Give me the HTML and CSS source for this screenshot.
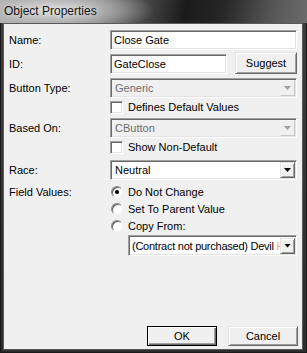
FILE: index.html
```html
<!DOCTYPE html>
<html lang="en">
<head>
    <meta charset="UTF-8">
    <title>Object Properties</title>
    <link rel="stylesheet" href="styles.css">
</head>
<body>
    <div class="window">
        <div class="titlebar"><span class="title">Object Properties</span></div>
        <div class="frame">
            <div class="client">
                <div class="form">
                    <div class="row first">
                        <span class="lbl">Name:</span>
                        <div class="textbox grow">Close Gate</div>
                    </div>
                    <div class="row">
                        <span class="lbl">ID:</span>
                        <div class="textbox id-box">GateClose</div>
                        <button class="btn suggest">Suggest</button>
                    </div>
                    <div class="row">
                        <span class="lbl">Button Type:</span>
                        <div class="combo disabled grow">
                            <span class="combo-text">Generic</span>
                            <span class="arrow"></span>
                        </div>
                    </div>
                    <div class="row check-row">
                        <span class="lbl"></span>
                        <span class="checkbox"></span>
                        <span class="opt-text">Defines Default Values</span>
                    </div>
                    <div class="row">
                        <span class="lbl">Based On:</span>
                        <div class="combo disabled grow">
                            <span class="combo-text">CButton</span>
                            <span class="arrow"></span>
                        </div>
                    </div>
                    <div class="row check-row">
                        <span class="lbl"></span>
                        <span class="checkbox"></span>
                        <span class="opt-text">Show Non-Default</span>
                    </div>
                    <div class="row race">
                        <span class="lbl">Race:</span>
                        <div class="combo grow">
                            <span class="combo-text">Neutral</span>
                            <span class="arrow"></span>
                        </div>
                    </div>
                    <div class="row radio-row radio-first">
                        <span class="lbl">Field Values:</span>
                        <span class="radio checked"></span>
                        <span class="opt-text">Do Not Change</span>
                    </div>
                    <div class="row radio-row">
                        <span class="lbl"></span>
                        <span class="radio"></span>
                        <span class="opt-text">Set To Parent Value</span>
                    </div>
                    <div class="row radio-row">
                        <span class="lbl"></span>
                        <span class="radio"></span>
                        <span class="opt-text">Copy From:</span>
                    </div>
                    <div class="row copy-row">
                        <div class="combo copy grow">
                            <span class="combo-text">(Contract not purchased) Devil <span class="clipped">H</span></span>
                            <span class="arrow"></span>
                        </div>
                    </div>
                </div>
                <div class="actions">
                    <button class="btn default">OK</button>
                    <button class="btn">Cancel</button>
                </div>
            </div>
        </div>
    </div>
</body>
</html>
```
FILE: styles.css
```css
/* Window */
body {
    margin: 0;
    width: 307px;
    height: 353px;
    overflow: hidden;
    font-family: "Liberation Sans", Arial, sans-serif;
    font-size: 11px;
    color: #000;
}

.window {
    width: 307px;
    height: 353px;
    display: flex;
    flex-direction: column;
    background: #353535;
}

.titlebar {
    height: 23px;
    flex: none;
    padding-left: 4px;
    background:
        radial-gradient(ellipse 100px 24px at 55px 10px, rgba(225, 225, 225, 0.95), rgba(190, 190, 190, 0.65) 55%, rgba(0, 0, 0, 0) 100%),
        linear-gradient(100deg, #a8a8a8 0%, #808080 30%, #1b1b1b 60%, #262626 72%, #555 88%, #6c6c6c 100%);
}

.title {
    display: block;
    font-size: 12px;
    line-height: 12px;
    padding-top: 5px;
    color: #151515;
    text-shadow: 0 0 6px rgba(255, 255, 255, 0.8);
}

.frame {
    flex: 1;
    display: flex;
    min-width: 0;
    padding: 0 4px 3px 3px;
    background: linear-gradient(to bottom, #3c3c3c, #2c2c2c);
    box-shadow: inset 1px 0 #1a1a1a, inset -1px 0 #1a1a1a, inset 0 -1px #1a1a1a;
}

.client {
    flex: 1;
    min-width: 0;
    display: flex;
    flex-direction: column;
    background: #f0f0f0;
    border: 1px solid #5a5a5a;
    padding: 0 5px 3px 5px;
}

/* Rows */
.form {
    display: flex;
    flex-direction: column;
    min-width: 0;
}

.row {
    display: flex;
    align-items: center;
    height: 20px;
    margin-top: 4px;
    min-width: 0;
}

.row.first {
    margin-top: 6px;
}

.row.race {
    margin-top: 6px;
}

.check-row {
    height: 14px;
    margin-top: 2px;
}

.radio-row {
    height: 17px;
    margin-top: 0;
}

.radio-row.radio-first {
    margin-top: 3px;
}

.copy-row {
    height: 21px;
    margin-top: 1px;
    padding-left: 119px;
}

.lbl {
    width: 101px;
    flex: none;
}

.grow {
    flex: 1;
    min-width: 0;
}

.opt-text {
    margin-left: 5px;
}

/* Inputs */
.textbox,
.combo {
    height: 20px;
    box-sizing: border-box;
    background: #fff;
    border: 1px solid;
    border-color: #a0a0a0 #fff #fff #a0a0a0;
    box-shadow: inset 1px 1px #696969, inset -1px -1px #e3e3e3;
    display: flex;
    align-items: center;
}

.textbox {
    padding-left: 3px;
}

.id-box {
    width: 117px;
    flex: none;
}

.combo {
    padding: 1px 1px 1px 4px;
}

.combo-text {
    flex: 1;
    min-width: 0;
    overflow: hidden;
    white-space: nowrap;
}

.combo.disabled {
    background: #f0f0f0;
    color: #6d6d6d;
}

.combo.copy {
    height: 21px;
    padding-left: 3px;
}

.copy .combo-text {
    letter-spacing: -0.25px;
}

.clipped {
    color: #f2b24a;
}

.arrow {
    width: 15px;
    height: 16px;
    flex: none;
    box-sizing: border-box;
    background: #f0f0f0;
    border: 1px solid;
    border-color: #e3e3e3 #696969 #696969 #e3e3e3;
    box-shadow: inset 1px 1px #fff, inset -1px -1px #a0a0a0;
    display: flex;
    align-items: center;
    justify-content: center;
}

.arrow::after {
    content: "";
    width: 7px;
    height: 4px;
    background: #000;
    clip-path: polygon(0 0, 100% 0, 50% 100%);
}

.disabled .arrow {
    border-color: #f4f4f4 #c8c8c8 #c8c8c8 #f4f4f4;
    box-shadow: none;
}

.disabled .arrow::after {
    background: #a0a0a0;
}

/* Check & radio */
.checkbox {
    width: 13px;
    height: 13px;
    flex: none;
    box-sizing: border-box;
    background: #fff;
    border: 1px solid;
    border-color: #a0a0a0 #fff #fff #a0a0a0;
    box-shadow: inset 1px 1px #696969, inset -1px -1px #e3e3e3;
}

.radio {
    width: 12px;
    height: 12px;
    flex: none;
    box-sizing: border-box;
    border-radius: 50%;
    background: #fff;
    border: 1px solid;
    border-color: #8a8a8a #f4f4f4 #f4f4f4 #8a8a8a;
    box-shadow: inset 1px 1px #5a5a5a;
    display: flex;
    align-items: center;
    justify-content: center;
    margin-left: 1px;
}

.radio.checked::after {
    content: "";
    width: 4px;
    height: 4px;
    border-radius: 50%;
    background: #000;
}

/* Buttons */
.btn {
    font: inherit;
    color: #000;
    background: #f0f0f0;
    box-sizing: border-box;
    height: 20px;
    width: 70px;
    flex: none;
    padding: 0;
    border: 1px solid;
    border-color: #e3e3e3 #696969 #696969 #e3e3e3;
    box-shadow: inset 1px 1px #fff, inset -1px -1px #a0a0a0;
}

.suggest {
    width: 62px;
    height: 22px;
    margin-left: 8px;
    margin-top: -3px;
}

.btn.default {
    border-color: #000;
    box-shadow: inset 1px 1px #fff, inset -1px -1px #696969, inset -2px -2px #a0a0a0;
}

.actions {
    margin-top: auto;
    display: flex;
    justify-content: flex-end;
    gap: 11px;
    margin-right: -1px;
}
```
